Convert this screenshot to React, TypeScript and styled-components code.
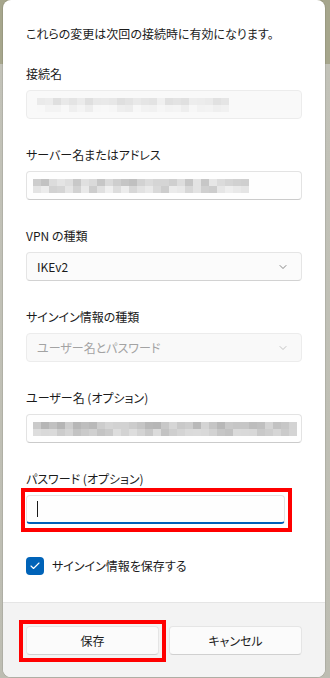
import styled, { createGlobalStyle } from "styled-components";
import { ChevronDown, Check } from "lucide-react";

const GlobalStyle = createGlobalStyle`
    html, body {
        margin: 0;
        padding: 0;
    }
    body {
        background: linear-gradient(#a6a68c 0, #a6a68c 64px, #c2c2b8 64px, #bdbdb2 100%);
        font-family: "Noto Sans CJK JP", "Noto Sans", sans-serif;
        font-feature-settings: "palt";
    }
`;

const Page = styled.div`
    width: 330px;
    height: 678px;
    display: flex;
    padding-left: 3px;
    box-sizing: border-box;
`;

const Dialog = styled.div`
    width: 322px;
    height: 677px;
    display: flex;
    flex-direction: column;
    background: #ffffff;
    border-radius: 8px;
    overflow: hidden;
    box-shadow: 0 0 0 1px rgba(0, 0, 0, 0.08);
`;

const Body = styled.div`
    flex: 1;
    display: flex;
    flex-direction: column;
    padding: 26px 23px 0 23px;
`;

const Intro = styled.div`
    font-size: 12px;
    line-height: 16px;
    color: #1b1b1b;
    margin-bottom: 24px;
`;

const Fields = styled.div`
    display: flex;
    flex-direction: column;
    gap: 28px;
`;

const Field = styled.div`
    display: flex;
    flex-direction: column;
    gap: 8px;
`;

const Label = styled.div`
    font-size: 12px;
    line-height: 16px;
    color: #1b1b1b;
`;

// red annotation frame drawn around a control; negative margins keep the control in place
const Highlight = styled.div<{ $pad: string; $margin: string }>`
    border: 4px solid #ff0000;
    padding: ${({ $pad }) => $pad};
    margin: ${({ $margin }) => $margin};
    align-self: flex-start;
`;

const Input = styled.div<{ $disabled?: boolean; $focused?: boolean; $width?: number }>`
    height: 29px;
    box-sizing: border-box;
    display: flex;
    align-items: center;
    padding: 0 6px;
    border-radius: 4px;
    border: 1px solid ${({ $disabled }) => ($disabled ? "#ececec" : "#e3e3e3")};
    border-bottom-color: ${({ $disabled, $focused }) => ($focused ? "#0060b8" : $disabled ? "#ececec" : "#cbcbcb")};
    border-bottom-width: ${({ $focused }) => ($focused ? "2px" : "1px")};
    background: ${({ $disabled }) => ($disabled ? "#f9f9f9" : "#fefefe")};
    width: ${({ $width }) => ($width ? `${$width}px` : "auto")};
`;

const Caret = styled.div`
    width: 1px;
    height: 16px;
    margin-left: 4px;
    background: #1b1b1b;
`;

const Select = styled.div<{ $disabled?: boolean }>`
    height: 29px;
    box-sizing: border-box;
    display: flex;
    align-items: center;
    justify-content: space-between;
    padding: 0 12px 0 10px;
    border-radius: 4px;
    border: 1px solid ${({ $disabled }) => ($disabled ? "#ececec" : "#e5e5e5")};
    border-bottom-color: ${({ $disabled }) => ($disabled ? "#ececec" : "#d2d2d2")};
    background: ${({ $disabled }) => ($disabled ? "#f9f9f9" : "#fbfbfb")};
    font-size: 12px;
    color: ${({ $disabled }) => ($disabled ? "#a3a3a3" : "#1b1b1b")};
`;

const Redacted = styled.div<{ $rows: number }>`
    display: grid;
    grid-template-rows: repeat(${({ $rows }) => $rows}, 7px);
`;

const RedactedRow = styled.div`
    display: flex;
`;

const Pixel = styled.div`
    width: 8px;
    height: 7px;
`;

const CheckRow = styled.div`
    display: flex;
    align-items: center;
    gap: 8px;
    margin-top: 33px;
`;

const CheckBox = styled.div`
    width: 18px;
    height: 18px;
    border-radius: 4px;
    background: #0063b8;
    display: flex;
    align-items: center;
    justify-content: center;
    color: #ffffff;
`;

const CheckLabel = styled.div`
    font-size: 12px;
    line-height: 16px;
    color: #1b1b1b;
`;

const Footer = styled.div`
    display: grid;
    grid-template-columns: 1fr 1fr;
    gap: 10px;
    padding: 23px 23px 22px 23px;
    background: #f3f3f3;
    border-top: 1px solid #e5e5e5;
`;

const Button = styled.button`
    width: 100%;
    height: 29px;
    border-radius: 4px;
    border: 1px solid #e5e5e5;
    border-bottom-color: #d0d0d0;
    background: #fbfbfb;
    font-family: "Noto Sans CJK JP", "Noto Sans", sans-serif;
    font-feature-settings: "palt";
    font-size: 12px;
    color: #1b1b1b;
    padding: 0;
    display: block;
`;

const ButtonFrame = styled(Highlight)`
    align-self: stretch;
`;

// deterministic grey shades for the pixelated (blurred) values
const shades = (seed: number, count: number, light: number, dark: number) => {
    const out: string[] = [];
    let s = seed;
    for (let i = 0; i < count; i++) {
        s = (s * 9301 + 49297) % 233280;
        const v = Math.round(light - (s / 233280) * (light - dark));
        out.push(`rgb(${v},${v},${v})`);
    }
    return out;
};

const BlurValue = ({ seed, width, rows, light, dark, offset }: { seed: number; width: number; rows: number; light: number; dark: number; offset: number }) => {
    const cols = Math.round(width / 8);
    return (
        <Redacted $rows={rows} style={{ marginLeft: offset }}>
            {Array.from({ length: rows }).map((_, r) => (
                <RedactedRow key={r}>
                    {shades(seed + r * 17, cols, light + r * 8, dark + r * 14).map((c, i) => (
                        <Pixel key={i} style={{ background: c }} />
                    ))}
                </RedactedRow>
            ))}
        </Redacted>
    );
};

const App = () => {
    return (
        <Page>
            <GlobalStyle />
            <Dialog>
                <Body>
                    <Intro>これらの変更は次回の接続時に有効になります。</Intro>
                    <Fields>
                        <Field>
                            <Label>接続名</Label>
                            <Input $disabled>
                                <BlurValue seed={3} width={192} rows={2} light={240} dark={222} offset={4} />
                            </Input>
                        </Field>
                        <Field>
                            <Label>サーバー名またはアドレス</Label>
                            <Input>
                                <BlurValue seed={11} width={216} rows={2} light={232} dark={190} offset={0} />
                            </Input>
                        </Field>
                        <Field>
                            <Label>VPN の種類</Label>
                            <Select>
                                IKEv2
                                <ChevronDown size={12} strokeWidth={1.5} color="#5f5f5f" />
                            </Select>
                        </Field>
                        <Field>
                            <Label>サインイン情報の種類</Label>
                            <Select $disabled>
                                ユーザー名とパスワード
                                <ChevronDown size={12} strokeWidth={1.5} color="#b0b0b0" />
                            </Select>
                        </Field>
                        <Field>
                            <Label>ユーザー名 (オプション)</Label>
                            <Input>
                                <BlurValue seed={29} width={264} rows={2} light={214} dark={180} offset={0} />
                            </Input>
                        </Field>
                        <Field>
                            <Label>パスワード (オプション)</Label>
                            <Highlight $pad="3px 3px 4px 1px" $margin="-7px 0 -8px -5px">
                                <Input $focused $width={259}>
                                    <Caret />
                                </Input>
                            </Highlight>
                        </Field>
                    </Fields>
                    <CheckRow>
                        <CheckBox>
                            <Check size={12} strokeWidth={2.2} />
                        </CheckBox>
                        <CheckLabel>サインイン情報を保存する</CheckLabel>
                    </CheckRow>
                </Body>
                <Footer>
                    <ButtonFrame $pad="2px 3px 3px 3px" $margin="-6px -7px -7px -7px">
                        <Button>保存</Button>
                    </ButtonFrame>
                    <Button>キャンセル</Button>
                </Footer>
            </Dialog>
        </Page>
    );
};

export default App;
